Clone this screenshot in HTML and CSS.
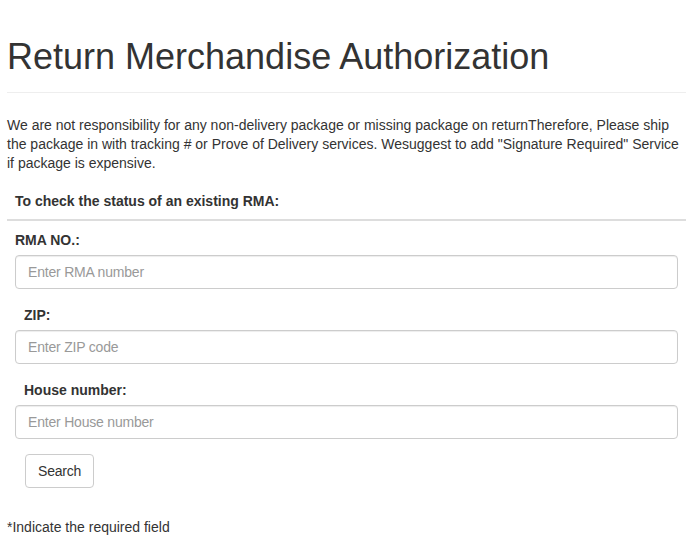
FILE: index.html
```html
<!DOCTYPE html>
<html lang="en">
<head>
<meta charset="utf-8">
<title>Return Merchandise Authorization</title>
<link rel="stylesheet" href="styles.css">
</head>
<body>
<div class="page">
  <h1 class="title">Return Merchandise Authorization</h1>
  <hr class="rule">
  <p class="notice">We are not responsibility for any non-delivery package or missing package on returnTherefore, Please ship the package in with tracking # or Prove of Delivery services. Wesuggest to add "Signature Required" Service if package is expensive.</p>
  <div class="check">
    <div class="check-title">To check the status of an existing RMA:</div>
  </div>
  <form class="form">
    <label class="label label-first">RMA NO.:</label>
    <input class="field" type="text" placeholder="Enter RMA number">
    <label class="label">ZIP:</label>
    <input class="field" type="text" placeholder="Enter ZIP code">
    <label class="label">House number:</label>
    <input class="field" type="text" placeholder="Enter House number">
    <div class="actions"><button class="btn" type="button">Search</button></div>
  </form>
  <p class="footnote">*Indicate the required field</p>
</div>
</body>
</html>
```
FILE: styles.css
```css
html, body {
  margin: 0;
  padding: 0;
  background: #fff;
}
body {
  font-family: "Liberation Sans", Arial, sans-serif;
  color: #333;
  font-size: 14px;
}
.page {
  padding: 0 4px 0 7px;
}
.title {
  margin: 0;
  padding-top: 35px;
  font-size: 36px;
  font-weight: 400;
  line-height: 44px;
  color: #333;
}
.rule {
  margin: 13px 0 0;
  border: 0;
  border-top: 1px solid #eee;
}
.notice {
  margin: 23px 0 0;
  font-size: 14px;
  line-height: 19px;
}
.check {
  margin-top: 19px;
  border-bottom: 2px solid #ddd;
  padding: 0 0 9px 8px;
}
.check-title {
  font-weight: 700;
  font-size: 14px;
  line-height: 18px;
}
.form {
  display: flex;
  flex-direction: column;
  padding: 0 8px 0 8px;
}
.label {
  font-weight: 700;
  font-size: 14px;
  line-height: 18px;
  margin: 17px 0 6px 9px;
}
.label-first {
  margin: 10px 0 6px 0;
}
.field {
  box-sizing: border-box;
  height: 34px;
  padding: 6px 12px;
  border: 1px solid #ccc;
  border-radius: 4px;
  font-family: "Liberation Sans", Arial, sans-serif;
  font-size: 14px;
  letter-spacing: -0.2px;
  color: #555;
  box-shadow: inset 0 1px 1px rgba(0,0,0,.075);
}
.field::placeholder {
  color: #999;
}
.actions {
  padding: 15px 0 0 10px;
}
.btn {
  box-sizing: border-box;
  height: 34px;
  padding: 6px 12px;
  background: #fff;
  border: 1px solid #ccc;
  border-radius: 4px;
  font-family: "Liberation Sans", Arial, sans-serif;
  font-size: 14px;
  letter-spacing: -0.2px;
  color: #333;
}
.footnote {
  margin: 30px 0 0;
  font-size: 14px;
  line-height: 18px;
}
```
